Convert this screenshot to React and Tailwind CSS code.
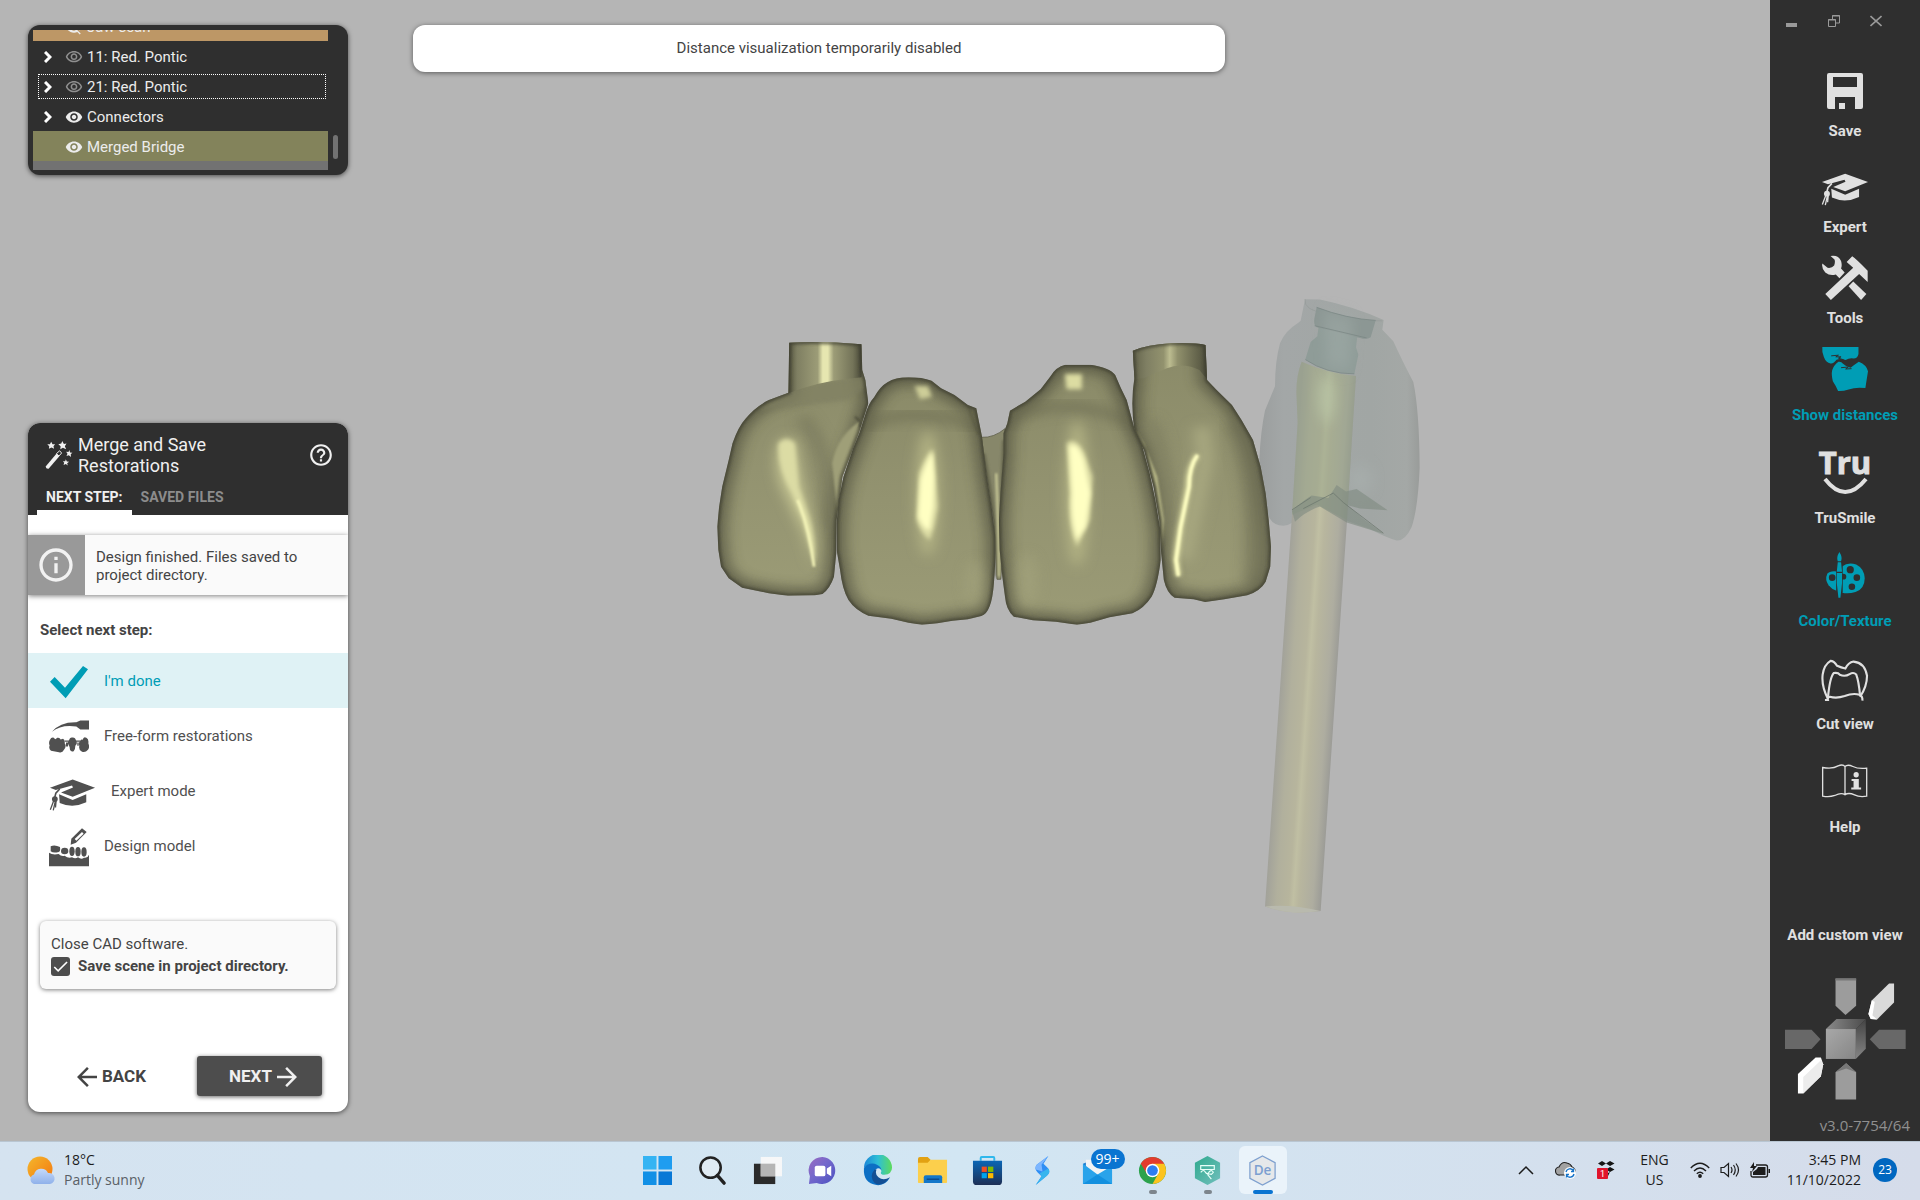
import React, { useState } from 'react';
import { MdVisibility, MdOutlineVisibility, MdVisibilityOff, MdHelpOutline, MdInfoOutline, MdCheck, MdArrowBack, MdArrowForward } from 'react-icons/md';

/* ---------- icons ---------- */

const CapIcon = ({ className }) => (
  <svg viewBox="155 515 145 105" className={className} fill="currentColor">
    <path d="M158 545L228 520L297 545L228 573L192 560L229 544L226 538L176 552Z" />
    <path d="M186 565L228 583L270 565V590Q228 610 188 592Z" />
    <circle cx="173" cy="580" r="9" />
    <path d="M188 549L176 562L172 578" fill="none" stroke="currentColor" strokeWidth="5" />
    <path d="M170 584L159 613M175 584L168 615M177 584L175 606" fill="none" stroke="currentColor" strokeWidth="4" />
  </svg>
);

const SaveIcon = () => (
  <svg viewBox="0 0 36 36" className="h-9 w-9" fill="currentColor" fillRule="evenodd">
    <path d="M2 0H34Q36 0 36 2V34Q36 36 34 36H28V24H8V36H2Q0 36 0 34V2Q0 0 2 0ZM6 4V14H30V4Z" />
    <path d="M12 30H18V36H12Z" />
  </svg>
);

const ToolsIcon = () => (
  <svg viewBox="153 767 144 140" className="h-[46px] w-12" fill="currentColor">
    <path d="M181 770Q205 766 213 785Q217 798 213 808L224 820L208 838L197 826Q180 832 165 820Q153 808 156 793L172 806Q185 808 192 799Q196 788 193 781Z" />
    <path d="M236 862L250 848L290 886L274 904Z" />
    <path d="M230 788L247 771Q258 778 294 815V849L268 825L182 904L165 886L250 806Z" />
  </svg>
);

const DistancesIcon = () => (
  <svg viewBox="153 1036 146 144" className="h-12 w-12" fill="currentColor">
    <path d="M157 1041H267V1062Q264 1076 252 1076Q238 1074 228 1081Q212 1074 200 1080Q192 1092 182 1091Q168 1088 162 1072Q155 1056 157 1041Z" />
    <path d="M187 1112Q192 1096 206 1086Q214 1084 220 1092Q230 1102 243 1104Q256 1094 268 1086Q292 1096 296 1115Q292 1140 288 1166Q260 1162 237 1170Q220 1176 205 1175Q198 1158 189 1145Q184 1125 187 1112Z" />
    <path d="M184 1068L206 1066L198 1071L214 1071L206 1075L222 1080M214 1104L236 1102L228 1108L246 1107" fill="none" stroke="#2f2f2f" strokeWidth="3" />
  </svg>
);

const TruIcon = () => (
  <svg viewBox="0 0 48 48" className="h-12 w-12 overflow-visible" fill="currentColor">
    <text x="24" y="26" textAnchor="middle" fontSize="31" stroke="currentColor" strokeWidth="1" fontFamily="'Open Sans', sans-serif">Tru</text>
    <path d="M4 31Q24 57 45 31" fill="none" stroke="currentColor" strokeWidth="4" />
  </svg>
);

const PaletteIcon = () => (
  <svg viewBox="153 394 146 144" className="h-12 w-12" fill="currentColor">
    <path d="M202 455Q180 452 172 462Q164 480 176 497Q186 510 202 515Z" />
    <path d="M217 440Q235 426 260 434Q284 446 286 475Q286 508 258 518Q236 524 217 520Z" />
    <g fill="#2f2f2f">
      <circle cx="187" cy="474" r="10" />
      <circle cx="242" cy="450" r="11" />
      <circle cx="262" cy="474" r="10" />
      <circle cx="247" cy="502" r="10" />
      <circle cx="221" cy="471" r="9" />
      <path d="M199 420H219V520H199Z" />
    </g>
    <path d="M209 396Q219 412 214 424H204Q199 412 209 396ZM204 427H214L217 456H201ZM201 460H217V490L212 535H206L201 490Z" />
  </svg>
);

const CutViewIcon = () => (
  <svg viewBox="153 703 146 144" className="h-12 w-12" fill="none" stroke="currentColor" strokeWidth="6.500">
    <path d="M174 838Q154 800 158 765Q162 735 182 723Q192 723 202 738Q215 744 227 746Q236 728 252 725Q286 728 293 768Q293 800 272 832" />
    <path d="M174 836Q180 772 192 760Q205 758 210 765Q226 772 240 763Q252 756 260 764Q268 785 272 830" />
    <path d="M165 842H174Q172 834 180 832Q200 838 225 830Q250 820 270 826Q280 830 279 844" />
  </svg>
);

const HelpBookIcon = () => (
  <svg viewBox="153 1012 146 144" className="h-12 w-12" fill="none" stroke="currentColor" strokeWidth="4">
    <path d="M158 1043Q190 1048 205 1038Q220 1032 226 1040Q234 1032 250 1040Q266 1048 292 1045V1130Q270 1134 255 1126Q236 1118 226 1126Q215 1118 195 1128Q178 1134 158 1130ZM226 1040V1126" />
    <g fill="currentColor" stroke="none">
      <circle cx="260" cy="1065" r="8" />
      <path d="M246 1078H268V1104H275V1110H245V1104H252V1084H246Z" />
    </g>
  </svg>
);

const WandIcon = () => (
  <svg viewBox="103 92 86 90" className="h-[30px] w-7 shrink-0" fill="currentColor">
    <path d="M105 172L138 133L147 141L114 179Q106 180 105 172Z" />
    <path d="M138 133L148 124L154 131L146 140Z" fill="none" stroke="currentColor" strokeWidth="3" />
    <path d="M122 96L126 104L134 104L129 110L131 118L123 114L115 118L116 110L110 104L118 104Z" />
    <path d="M156 94L161 103L169 102L164 110L168 119L158 115L150 119L151 110L144 104L153 102Z" />
    <path d="M178 122L180 129L187 130L182 135L183 143L176 138L169 140L172 133L168 127L175 128Z" />
    <path d="M167 150L170 157L177 158L171 162L173 169L167 165L160 168L162 161L158 156L165 156Z" />
  </svg>
);

const DoneIcon = () => (
  <svg viewBox="118 762 120 102" className="h-[34px] w-10 text-[#009db5]" fill="currentColor">
    <path d="M121 812L135 798L166 830L220 765L235 775L168 862Z" />
  </svg>
);

const FreeformIcon = () => (
  <svg viewBox="118 88 120 104" className="h-[35px] w-10" fill="currentColor">
    <path d="M127 126Q150 96 200 97L212 92H238V119H212L200 110Q155 103 127 126Z" />
    <path d="M121 150Q124 142 131 143L137 148L143 144Q150 142 153 149L160 147Q167 150 165 160Q172 168 163 180Q158 190 148 187L124 183Q116 176 120 167Q116 158 121 150Z" />
    <path d="M178 152Q180 142 188 143Q197 142 199 152Q205 160 197 168Q197 180 192 184Q184 187 181 180Q182 172 177 166Q172 158 178 152Z" />
    <path d="M211 154Q214 146 219 150Q222 138 230 144Q238 148 236 160Q241 172 235 180Q226 190 216 185Q206 180 209 168Q205 160 211 154Z" />
    <path d="M166 152H212V156H166ZM169 158H175V170H169ZM203 158H207V168H203Z" />
  </svg>
);

const DesignIcon = () => (
  <svg viewBox="117 408 120 118" className="h-10 w-10" fill="currentColor">
    <path d="M184 442L216 411L230 422L198 454L182 460Z" />
    <path d="M194 443L216 422L221 427L199 448Z" fill="#fff" />
    <path d="M117 484Q128 492 146 488Q154 496 164 493Q174 502 186 498Q196 504 204 498Q214 506 222 499Q232 502 237 490V525H117Z" />
    <path d="M122 465Q134 459 150 467Q152 480 146 482Q130 486 122 480Z" />
    <ellipse cx="164" cy="479" rx="11" ry="10" />
    <ellipse cx="186" cy="480" rx="8" ry="14" />
    <ellipse cx="204" cy="481" rx="8" ry="14" />
    <ellipse cx="222" cy="482" rx="8" ry="14" />
  </svg>
);

/* ---------- 3D scene ---------- */

const TEETH = [
  {
    id: 'lateral-left',
    d: 'M233 68Q320 63 422 73L424 150L432 180L440 250L415 340L372 470L357 600L356 700L350 770Q340 805 320 822L300 826L230 827L180 820L110 803L75 775L55 740L48 690L45 620L50 560L58 500L75 420L85 370Q100 320 120 295Q145 260 180 240L231 218Z',
  },
  {
    id: 'lateral-right',
    d: 'M1131 92Q1170 74 1230 70Q1290 67 1321 75L1325 180L1350 210L1390 255L1415 300L1445 360L1465 440L1478 520L1486 600L1492 680L1490 740L1478 785Q1465 812 1430 826L1370 838L1320 846L1290 838L1240 833Q1220 820 1212 780L1205 700L1200 600L1185 500L1160 390L1136 340Q1124 250 1135 175Z',
  },
  {
    id: 'central-left',
    d: 'M430 290Q440 250 455 232Q470 200 490 187Q510 172 545 172Q580 172 605 182L630 205L665 225L700 255L722 265L728 300L737 350L742 400L750 470L762 560L772 650L772 720L768 790Q762 880 735 888L700 898L660 902L620 910L580 914L545 908L500 896L440 887Q405 870 388 840Q372 810 366 750L357 690L357 610L362 540L375 470L400 385Q418 340 430 290Z',
  },
  {
    id: 'central-right',
    d: 'M810 272L850 245L890 208L915 170Q930 140 955 134L1020 134Q1070 142 1085 165L1100 205L1115 240L1135 325L1155 375L1175 460L1190 540L1203 630L1204 720Q1195 800 1180 830Q1160 865 1130 880L1070 892L1020 908L985 914L930 905L870 901L820 890Q800 870 797 830L790 770L783 690L781 600L785 520L793 400L793 340L803 310Z',
  },
];

const DETAILS = {
  'lateral-left': (
    <>
      <path d="M225 215Q300 186 375 177L435 168V200L390 240L250 260L150 270Z" fill="#7f7f62" opacity=".7" filter="url(#soft)" />
      <path d="M233 60H422V172L375 178Q300 188 231 220Z" fill="url(#post)" />
      <path d="M265 290Q350 400 335 620" fill="none" stroke="#77775b" strokeWidth="36" opacity=".7" filter="url(#wide)" />
      <path d="M345 430Q360 340 430 295V420L365 640Z" fill="#9f9f78" filter="url(#fine)" />
      <path d="M405 290L420 306L418 322" fill="none" stroke="#4b4b3a" strokeWidth="5" filter="url(#fine)" />
      <path d="M205 380Q225 330 250 370L268 500L290 610L300 745L272 640L230 540Q190 460 205 380Z" fill="#c6c693" filter="url(#wide)" />
      <path d="M205 370Q225 345 248 370L258 500L285 590Q305 660 300 735Q285 680 268 600L240 520Q200 440 205 370Z" fill="#dcdca4" filter="url(#soft)" />
      <path d="M255 540Q285 620 298 740" stroke="#f6f6ba" strokeWidth="7" fill="none" filter="url(#fine)" />
    </>
  ),
  'lateral-right': (
    <>
      <path d="M1125 60H1330L1327 180L1305 150Q1260 126 1220 145L1160 174L1135 178Z" fill="url(#postDim)" />
      <path d="M1400 300Q1470 480 1450 800" fill="none" stroke="#6c6c52" strokeWidth="60" opacity=".6" filter="url(#wide)" />
      <path d="M1175 300Q1230 420 1222 640" fill="none" stroke="#808062" strokeWidth="40" opacity=".8" filter="url(#wide)" />
      <path d="M1140 330L1165 390L1190 500L1204 600L1206 690L1212 600L1195 470L1160 370Z" fill="#b8b887" filter="url(#fine)" />
      <path d="M1310 320L1320 420L1285 600L1262 720" stroke="#a8a880" strokeWidth="44" fill="none" filter="url(#wide)" />
      <path d="M1300 405Q1276 440 1276 500L1256 620L1244 720L1250 768" stroke="#d8d8a0" strokeWidth="16" fill="none" filter="url(#soft)" />
      <path d="M1300 405Q1278 440 1278 500L1256 620L1244 720L1250 768" stroke="#ffffc2" strokeWidth="9" fill="none" filter="url(#fine)" />
    </>
  ),
  'central-left': (
    <>
      <path d="M430 320Q540 250 735 320" stroke="#66664d" strokeWidth="34" fill="none" opacity=".5" filter="url(#wide)" />
      <path d="M702 258Q708 290 728 345" stroke="#55553f" strokeWidth="5" fill="none" opacity=".6" filter="url(#fine)" />
      <path d="M560 198H596L606 230L575 238Z" fill="#cdcd98" filter="url(#soft)" />
      <ellipse cx="595" cy="520" rx="30" ry="190" fill="#b4b484" filter="url(#wide)" />
      <path d="M608 385Q588 410 572 460L566 600Q576 640 600 660L612 620L622 560L616 480Z" fill="#dcdca4" filter="url(#soft)" />
      <path d="M608 395Q588 430 576 480L570 590Q585 630 600 630L610 560L612 470Z" fill="#ffffc2" filter="url(#soft)" />
      <ellipse cx="720" cy="790" rx="26" ry="70" fill="#a4a47e" opacity=".6" filter="url(#wide)" />
    </>
  ),
  'central-right': (
    <>
      <path d="M805 300Q960 215 1130 310" stroke="#66664d" strokeWidth="34" fill="none" opacity=".5" filter="url(#wide)" />
      <path d="M953 162H998V208H958Z" fill="#dcdca2" filter="url(#soft)" />
      <ellipse cx="985" cy="520" rx="30" ry="220" fill="#b4b484" filter="url(#wide)" />
      <path d="M958 370Q980 345 1005 400L1026 470L1018 600L985 680Q960 620 966 520Z" fill="#dcdca4" filter="url(#soft)" />
      <path d="M965 380Q985 360 1003 420L1020 520L1008 620L985 660Q968 600 972 520Z" fill="#ffffc2" filter="url(#soft)" />
      <ellipse cx="855" cy="780" rx="26" ry="80" fill="#a4a47e" opacity=".6" filter="url(#wide)" />
    </>
  ),
};

const Tooth = ({ id, d }) => (
  <g>
    <clipPath id={`clip-${id}`}><path d={d} /></clipPath>
    <g clipPath={`url(#clip-${id})`}>
      <path d={d} fill="url(#enamel)" />
      <path d={d} fill="none" stroke="#4b4b3a" strokeWidth="50" opacity=".65" filter="url(#wide)" />
      {DETAILS[id]}
      <path d={d} fill="none" stroke="#3a3a2e" strokeWidth="12" opacity=".7" filter="url(#edge)" />
    </g>
  </g>
);

const Scene = () => (
  <svg viewBox="0 0 1770 1141" className="absolute inset-0 h-full w-full" role="img" aria-label="Merged bridge">
    <defs>
      <filter id="wide" x="-80%" y="-40%" width="260%" height="180%"><feGaussianBlur stdDeviation="18" /></filter>
      <filter id="soft" x="-60%" y="-60%" width="220%" height="220%"><feGaussianBlur stdDeviation="6" /></filter>
      <filter id="edge" x="-20%" y="-20%" width="140%" height="140%"><feGaussianBlur stdDeviation="4" /></filter>
      <filter id="fine" x="-60%" y="-60%" width="220%" height="220%"><feGaussianBlur stdDeviation="2.5" /></filter>
      <linearGradient id="enamel" x2="0" y2="1">
        <stop offset="0" stopColor="#8a8a68" />
        <stop offset=".5" stopColor="#939370" />
        <stop offset="1" stopColor="#9b9b76" />
      </linearGradient>
      <linearGradient id="post">
        <stop offset="0" stopColor="#55553f" />
        <stop offset=".12" stopColor="#7f7f62" />
        <stop offset=".4" stopColor="#9c9c77" />
        <stop offset=".47" stopColor="#e6e6b0" />
        <stop offset=".54" stopColor="#e6e6b0" />
        <stop offset=".62" stopColor="#9c9c77" />
        <stop offset=".88" stopColor="#747459" />
        <stop offset="1" stopColor="#4a4a39" />
      </linearGradient>
      <linearGradient id="postDim">
        <stop offset="0" stopColor="#5e5e47" />
        <stop offset=".2" stopColor="#7f7f63" />
        <stop offset=".42" stopColor="#92926e" />
        <stop offset=".5" stopColor="#bcbc90" />
        <stop offset=".6" stopColor="#90906c" />
        <stop offset="1" stopColor="#4a4a39" />
      </linearGradient>
      <linearGradient id="rod" gradientUnits="userSpaceOnUse" x1="135" y1="1535" x2="301" y2="1549">
        <stop offset="0" stopColor="#a2a29a" />
        <stop offset=".2" stopColor="#b1b09d" />
        <stop offset=".42" stopColor="#b7b59d" />
        <stop offset=".5" stopColor="#c0bfa3" />
        <stop offset=".6" stopColor="#b8b69e" />
        <stop offset=".85" stopColor="#aeada0" />
        <stop offset="1" stopColor="#9c9c97" />
      </linearGradient>
      <linearGradient id="shell">
        <stop offset="0" stopColor="#9b9e9e" />
        <stop offset=".15" stopColor="#a3a7a7" />
        <stop offset=".7" stopColor="#a1a6a4" />
        <stop offset=".92" stopColor="#a4a8a6" />
        <stop offset="1" stopColor="#999c9a" />
      </linearGradient>
    </defs>

    {/* implant with translucent crown */}
    <g transform="translate(1220 280) scale(0.3333 0.4082)">
      <path d="M255 47L300 48Q400 65 491 98L487 122L520 150Q545 195 580 250Q598 320 599 460Q594 560 575 605Q555 640 530 638Q500 632 450 610L380 590L300 552L260 565Q220 600 190 602Q150 600 143 570Q120 510 118 440Q122 370 135 320L165 260Q165 200 180 155Q195 125 235 105L242 100Z" fill="url(#shell)" />
      <path d="M255 47Q250 75 320 82Q420 102 487 100" fill="none" stroke="#959b99" strokeWidth="2" />
      <ellipse cx="420" cy="490" rx="40" ry="35" fill="#abb3b1" opacity=".5" filter="url(#wide)" />
      <path d="M245 200Q226 240 230 290L233 350L216 575L135 1535Q210 1556 302 1546L381 590L395 400L408 235Q320 228 245 200Z" fill="url(#rod)" />
      <path d="M245 200Q226 240 230 290L233 350L216 575L290 550L381 588L395 400L408 235Q320 228 245 200Z" fill="#8fa083" opacity=".42" />
      <ellipse cx="320" cy="290" rx="26" ry="60" fill="#bcc8a8" opacity=".7" filter="url(#wide)" />
      <path d="M135 1535Q210 1528 302 1546Q210 1556 135 1535Z" fill="#b9baae" />
      <path d="M296 113L412 138L408 165L415 183L403 230Q320 230 256 195L272 152L292 138Z" fill="#8f9c98" />
      <path d="M290 67Q380 95 467 99L452 140Q440 147 420 142L290 116Q280 108 283 95Z" fill="#8c9794" />
      <path d="M310 75L400 92L390 220L320 215Z" fill="#a0aca8" opacity=".5" filter="url(#wide)" />
      <path d="M290 67Q380 95 467 99M284 112L440 142M256 195Q320 230 403 230" fill="none" stroke="#7a8684" strokeWidth="2" />
      <path d="M216 565Q250 540 275 528L325 534L350 502L378 518L410 512L503 564L420 560L383 552L430 585L492 622L380 594L300 555Q260 565 225 592Z" fill="#7f8b80" opacity=".6" />
      <path d="M216 563L272 533M250 560L340 522L370 545L490 620" fill="none" stroke="#6b766c" strokeWidth="2" />
    </g>

    {/* merged bridge */}
    <g transform="translate(700 320) scale(0.3827 0.3333)">
      <path d="M735 352Q768 354 797 326V600L786 778H776L768 600Z" fill="#87876a" stroke="#55553f" strokeWidth="2" />
      <path d="M740 400Q775 600 776 770M795 360L788 600" stroke="#55553f" strokeWidth="10" fill="none" opacity=".7" filter="url(#edge)" />
      <path d="M774 460Q780 600 781 770" stroke="#c9c997" strokeWidth="6" fill="none" filter="url(#fine)" />
      {TEETH.map((tooth) => <Tooth key={tooth.id} {...tooth} />)}
    </g>
  </svg>
);

/* ---------- left panels ---------- */

const treeItems = [
  { name: 'Jaw scan', eye: 'off', row: 'bg-[#bd9766]' },
  { name: '11: Red. Pontic', eye: 'outline', expandable: true },
  { name: '21: Red. Pontic', eye: 'outline', expandable: true, focused: true },
  { name: 'Connectors', eye: 'on', expandable: true },
  { name: 'Merged Bridge', eye: 'on', row: 'bg-[#83835b]' },
];

const getEye = (eye) => {
  switch (eye) {
    case 'off': return <MdVisibilityOff className="h-[18px] w-[18px]" />;
    case 'outline': return <MdOutlineVisibility className="h-[18px] w-[18px] text-[#8f8f8f]" />;
    default: return <MdVisibility className="h-[18px] w-[18px]" />;
  }
};

const ObjectTree = () => (
  <section className="flex h-[150px] rounded-xl bg-[#2f2f2f] p-[5px] shadow-[0_1px_5px_rgba(0,0,0,0.6)]">
    <ul className="flex flex-1 flex-col justify-end overflow-hidden text-[15px] text-[#ececec]">
      {treeItems.map((item) => (
        <li key={item.name} className={`h-[30px] shrink-0 pt-[3px] pr-0.5 pl-[5px] ${item.row || ''}`}>
          <button className={`flex h-[25px] w-full items-center border pt-px pl-[5px] ${item.focused ? 'border-dotted border-white' : 'border-transparent'}`}>
            <span className="w-[21px]">
              {item.expandable && (
                <svg viewBox="0 0 8 12" className="h-3 w-2" fill="none" stroke="#fff" strokeWidth="3"><path d="M1 1L6 6L1 11" /></svg>
              )}
            </span>
            {getEye(item.eye)}
            <span className="ml-1">{item.name}</span>
          </button>
        </li>
      ))}
      <li className="h-[9px] shrink-0 bg-[#727272]" />
    </ul>
    <div className="flex w-[15px] flex-col justify-end pb-[11px] pl-[5px]">
      <div className="h-6 w-[5px] rounded-full bg-[#727272]" />
    </div>
  </section>
);

const steps = [
  { name: "I'm done", icon: <DoneIcon /> },
  { name: 'Free-form restorations', icon: <FreeformIcon /> },
  { name: 'Expert mode', icon: <CapIcon className="mt-1.5 h-[34px] w-[47px]" /> },
  { name: 'Design model', icon: <DesignIcon /> },
];

const Wizard = () => {
  const [activeTab, setActiveTab] = useState('next');
  const [activeStep, setActiveStep] = useState("I'm done");
  const [saveScene, setSaveScene] = useState(true);

  const tabClass = (tab) =>
    `h-[38px] border-b-[5px] px-[9px] pt-[7px] text-sm font-bold ${activeTab === tab ? 'border-white text-[#f0f0f0]' : 'border-transparent text-[#8c8c8c]'}`;

  return (
    <section className="flex flex-1 flex-col overflow-hidden rounded-xl bg-white text-[#444] shadow-[0_1px_5px_rgba(0,0,0,0.6)]">
      <header className="bg-[#2f2f2f] px-[9px] pt-[9px] text-[#f0f0f0]">
        <div className="flex h-[45px] items-center pr-[5px] pl-2">
          <WandIcon />
          <h1 className="ml-[5px] flex-1 text-lg leading-[21px]">Merge and Save<br />Restorations</h1>
          <button aria-label="Help"><MdHelpOutline className="h-[26px] w-[26px]" /></button>
        </div>
        <div className="flex">
          <button className={tabClass('next')} onClick={() => setActiveTab('next')}>NEXT STEP:</button>
          <button className={tabClass('files')} onClick={() => setActiveTab('files')}>SAVED FILES</button>
        </div>
      </header>

      <div className="mt-5 flex h-[60px] bg-[#fafafa] shadow-[0_1px_5px_rgba(0,0,0,0.5)]">
        <div className="flex w-[57px] items-center justify-center bg-[#999] pr-0.5">
          <MdInfoOutline className="h-10 w-10 text-[#f2f2f2]" />
        </div>
        <p className="flex-1 pt-[13px] pl-[11px] text-[15px] leading-[18px]">Design finished. Files saved to<br />project directory.</p>
      </div>

      <h2 className="mt-[25px] px-3 text-[15px] leading-5 font-bold">Select next step:</h2>
      <div className="mt-[13px] flex flex-col">
        {steps.map((step) => (
          <button
            key={step.name}
            onClick={() => setActiveStep(step.name)}
            className={`flex h-[55px] items-center gap-[15px] pt-0.5 pl-[21px] text-[15px] ${activeStep === step.name ? 'bg-[#dff2f5] text-[#009db5]' : 'text-[#505050]'}`}
          >
            {step.icon}
            {step.name}
          </button>
        ))}
      </div>

      <div className="mx-3 mt-12 rounded-md bg-[#fafafa] px-[11px] pt-3 pb-[11px] text-[15px] shadow-[0_1px_4px_rgba(0,0,0,0.5)]">
        <p className="leading-[22px]">Close CAD software.</p>
        <label className="flex items-center gap-2 leading-[23px] font-bold">
          <span className="relative h-[19px] w-[19px]">
            <input
              type="checkbox"
              checked={saveScene}
              onChange={(e) => setSaveScene(e.target.checked)}
              className="block h-[19px] w-[19px] appearance-none rounded-[3px] bg-[#4d4d4d]"
            />
            {saveScene && <MdCheck className="pointer-events-none absolute inset-0 h-[19px] w-[19px] text-white" />}
          </span>
          Save scene in project directory.
        </label>
      </div>

      <footer className="mt-auto flex items-center justify-between pr-[26px] pb-4 pl-11 text-[17px] font-bold">
        <button className="flex items-center pt-px"><MdArrowBack className="h-[30px] w-[30px]" />BACK</button>
        <button className="flex h-10 w-[125px] items-center justify-center rounded-[3px] bg-[#4d4d4d] pt-px pl-3 text-[#f0f0f0] shadow-[0_1px_4px_rgba(0,0,0,0.6)]">
          NEXT<MdArrowForward className="h-[30px] w-[30px]" />
        </button>
      </footer>
    </section>
  );
};

/* ---------- right toolbar ---------- */

const tools = [
  { name: 'Save', icon: <SaveIcon />, space: 'gap-1.5' },
  { name: 'Expert', icon: <CapIcon className="h-[35px] w-12" />, space: 'mt-6 gap-1' },
  { name: 'Tools', icon: <ToolsIcon />, space: 'mt-[17px] gap-1.5' },
  { name: 'Show distances', icon: <DistancesIcon />, space: 'mt-[17px] gap-3', active: true },
  { name: 'TruSmile', icon: <TruIcon />, space: 'mt-[23px] gap-3' },
  { name: 'Color/Texture', icon: <PaletteIcon />, space: 'mt-[23px] gap-3', active: true },
  { name: 'Cut view', icon: <CutViewIcon />, space: 'mt-[23px] gap-3' },
  { name: 'Help', icon: <HelpBookIcon />, space: 'mt-[23px] gap-3' },
];

const ViewCube = () => (
  <svg viewBox="45 230 370 375" className="h-[125px] w-[123px]">
    <defs>
      <linearGradient id="cubeFront" x2="1" y2="1"><stop stopColor="#a8a8a8" /><stop offset="1" stopColor="#868686" /></linearGradient>
      <linearGradient id="cubeTop" x2="1"><stop stopColor="#8a8a8a" /><stop offset="1" stopColor="#4c4c4c" /></linearGradient>
      <linearGradient id="cubeSide" x2="0" y2="1"><stop stopColor="#444" /><stop offset="1" stopColor="#858585" /></linearGradient>
    </defs>
    <path d="M200 234H262V316L230 344L200 316Z" fill="#9c9c9c" />
    <path d="M200 234H262V240H200Z" fill="#777" />
    <path d="M200 598V516L232 489L262 516V598Z" fill="#9c9c9c" />
    <path d="M200 516L232 489L262 516L232 505Z" fill="#777" />
    <path d="M48 388H128L155 417L128 446H48Z" fill="#686868" />
    <path d="M411 388H331L303 417L331 446H411Z" fill="#686868" />
    <path d="M376 249V306L325 357L306 356L299 341L309 300L361 249Z" fill="#dadada" />
    <path d="M309 300L318 304L311 345L325 357L306 356L299 341Z" fill="#fff" />
    <path d="M87 580V521L140 472H156L163 492L156 528L103 580Z" fill="#fff" />
    <path d="M103 580V530L156 480L163 492L156 528Z" fill="#ececec" />
    <path d="M171 386L203 356H291L261 386Z" fill="url(#cubeTop)" />
    <path d="M261 386L291 356V445L261 476Z" fill="url(#cubeSide)" />
    <path d="M171 386H261V476H171Z" fill="url(#cubeFront)" />
  </svg>
);

const Toolbar = () => (
  <aside className="flex w-[150px] shrink-0 flex-col items-center bg-[#2f2f2f] text-[15px] leading-5 font-bold text-[#e0e0e0]">
    <div className="flex h-[67px] w-full gap-[30px] pt-[15px] pl-4 text-[#9a9a9a]">
      <button aria-label="Minimize" className="h-3"><svg viewBox="0 0 12 12" className="h-3 w-3"><path d="M0 8H11V12H0Z" fill="currentColor" /></svg></button>
      <button aria-label="Restore" className="h-3"><svg viewBox="0 0 12 12" className="h-3 w-3" fill="none" stroke="currentColor"><path d="M4.500 4V.5H11.500V8H8M4 1H12" /><path d="M.5 4.500H7.500V11.500H.5ZM0 5H8" /></svg></button>
      <button aria-label="Close" className="h-3"><svg viewBox="0 0 12 12" className="h-3 w-3" fill="none" stroke="currentColor" strokeWidth="1.600"><path d="M.5 1L11.500 11M11.500 1L.5 11" /></svg></button>
    </div>
    {tools.map((tool) => (
      <button key={tool.name} className={`flex flex-col items-center ${tool.space} ${tool.active ? 'text-[#009db5]' : ''}`}>
        <span className="flex h-12 items-center">{tool.icon}</span>
        {tool.name}
      </button>
    ))}
    <button className="mt-[88px]">Add custom view</button>
    <div className="mt-8 pl-px"><ViewCube /></div>
    <p className="mt-[13px] self-end pr-[10px] font-['Open_Sans',sans-serif] text-[15px] font-normal text-[#8f8f8f]">v3.0-7754/64</p>
  </aside>
);

/* ---------- taskbar ---------- */

const apps = [
  {
    name: 'Start',
    icon: <><path d="M1 1H15V15H1Z" fill="#35b4f3" /><path d="M17 1H31V15H17Z" fill="#1f9df0" /><path d="M1 17H15V31H1Z" fill="#1290e6" /><path d="M17 17H31V31H17Z" fill="#0878d6" /></>,
  },
  {
    name: 'Search',
    icon: <><circle cx="14" cy="13" r="10.500" fill="#e9eef3" fillOpacity=".6" stroke="#222" strokeWidth="2.600" /><path d="M21 21L28 29" stroke="#222" strokeWidth="3.500" strokeLinecap="round" /></>,
  },
  {
    name: 'Task view',
    icon: <><path d="M2 9H24V30H2Z" fill="#2b2b2b" /><path d="M9 2H31V22H9Z" fill="#f8f8f8" fillOpacity=".92" /><path d="M9 9H24V22H9Z" fill="#b5b5b5" /></>,
  },
  {
    name: 'Chat',
    icon: <><path d="M16 2A14 14 0 1 1 10 29L2 30L3 22A14 14 0 0 1 16 2Z" fill="url(#chatFill)" /><rect x="8" y="11" width="11" height="11" rx="2" fill="#fff" /><path d="M20.500 14L25 11V22L20.500 19Z" fill="#fff" /></>,
  },
  {
    name: 'Edge',
    icon: <><path d="M2 14A14.500 14.500 0 0 1 31 13Q31 20 23 20.500Q18 20 20 17Q20 11 13 10Q5 9 2 14Z" fill="url(#edgeTop)" /><path d="M2 14Q5 8 13 9Q20 11 20 16Q18 12 14 15Q9 22 17 27Q24 30 29 23Q24 32 15 31Q1 29 2 14Z" fill="#0c6fc4" /><path d="M13 15Q7 22 13 29Q21 34 29 23Q22 27 17 23Q13 20 15 15Z" fill="#134f94" /></>,
  },
  {
    name: 'File Explorer',
    icon: <><path d="M1 4Q1 2 3 2H11L14 5V10H1Z" fill="#e2a112" /><path d="M1 8H11L14 5H31V28Q31 29 29 29H3Q1 29 1 28Z" fill="#fccf4c" /><path d="M7 29V23Q7 21 9 21H24Q26 21 26 23V29Z" fill="#1377c9" /><path d="M10 25H23" stroke="#0a4a8c" strokeWidth="1.500" /></>,
  },
  {
    name: 'Microsoft Store',
    icon: <><path d="M9 6V3Q9 2 10 2H22Q23 2 23 3V6" fill="none" stroke="#2fb8ec" strokeWidth="2" /><path d="M1 6H31V27Q31 31 27 31H5Q1 31 1 27Z" fill="url(#storeFill)" /><path d="M10 12H15.300V17.500H10Z" fill="#f25022" /><path d="M16.500 12H22V17.500H16.500Z" fill="#7fba00" /><path d="M10 18.700H15.300V24H10Z" fill="#00a4ef" /><path d="M16.500 18.700H22V24H16.500Z" fill="#ffb900" /></>,
  },
  {
    name: 'S',
    icon: <><path d="M22 1L10 10Q7 14 11 18L15 22L9 31L21 21Q25 17 21 13L17 9Z" fill="#2f8ef4" /><path d="M22 1L10 10Q8 12 9 15L16 17L15 10Z" fill="#7db6ff" /><path d="M22 14Q25 18 20 22L9 31L15 22L13 19Z" fill="#37b5ee" /></>,
  },
  {
    name: 'Mail',
    icon: <><path d="M1 9L16 3L31 9V30H1Z" fill="#1b7bd0" /><path d="M4 5H28V17L16 22L4 14Z" fill="#f4f4f4" /><path d="M1 9L16 20L31 11V30H1Z" fill="#2aa3ea" /><path d="M1 30L16 20L31 30Z" fill="#1390df" /></>,
    badge: '99+',
  },
  {
    name: 'Chrome',
    icon: <><circle cx="16" cy="16" r="14" fill="#2ba24c" /><path d="M16 16L3.900 9A14 14 0 0 1 28.100 9Z" fill="#e33b2e" /><path d="M16 9H28.100A14 14 0 0 1 16 30L22 19Z" fill="#fcc31e" /><path d="M4 9L10 19L16 9Z" fill="#e33b2e" /><circle cx="16" cy="16" r="7" fill="#fff" /><circle cx="16" cy="16" r="5.500" fill="#2d7df0" /></>,
    running: true,
  },
  {
    name: 'Dental DB',
    icon: <><path d="M16 1L29 8V24L16 31L3 24V8Z" fill="url(#dbFill)" /><path d="M9 11H23V15H9ZM9 18Q12 14 14 18Q16 21 18 17Q21 15 22 18L20 20L15 19M16 20L20 25" fill="none" stroke="#e8fff8" strokeWidth="1.200" /></>,
    running: true,
  },
  {
    name: 'Designer',
    icon: <><path d="M16 1L29 8V24L16 31L3 24V8Z" fill="#e6e8ea" stroke="#7ea0cf" strokeWidth="1.300" /><text x="16" y="21" textAnchor="middle" fontSize="14" fontWeight="600" fill="#7d9fd0" fontFamily="'Open Sans', sans-serif">De</text></>,
    current: true,
  },
];

const Taskbar = () => (
  <footer className="grid h-[59px] shrink-0 grid-cols-[1fr_auto_1fr] items-center border-t border-[#b9c6d2] bg-linear-to-r from-[#d5e3f0] via-[#d2e6f3] to-[#d5dcea] pb-0.5 font-['Open_Sans','Noto_Sans',sans-serif] text-sm leading-5 text-[#1c1c1c]">
    <svg className="absolute h-0 w-0">
      <defs>
        <linearGradient id="chatFill" x2="1" y2="1"><stop stopColor="#9b6bc0" /><stop offset=".45" stopColor="#7468cc" /><stop offset="1" stopColor="#4a50c0" /></linearGradient>
        <linearGradient id="edgeTop" x2="1"><stop stopColor="#1a86d8" /><stop offset=".5" stopColor="#2fbfd5" /><stop offset="1" stopColor="#5ddb5c" /></linearGradient>
        <linearGradient id="storeFill" x2="0" y2="1"><stop stopColor="#0b66b5" /><stop offset="1" stopColor="#1d2f55" /></linearGradient>
        <linearGradient id="dbFill" x2="1" y2="1"><stop stopColor="#2ea98d" /><stop offset="1" stopColor="#72bfbd" /></linearGradient>
        <linearGradient id="sunFill" x2="1" y2="1"><stop stopColor="#f4b72c" /><stop offset="1" stopColor="#f4770f" /></linearGradient>
        <linearGradient id="cloudFill" x2="0" y2="1"><stop stopColor="#c4d9fa" /><stop offset="1" stopColor="#8fb1ea" /></linearGradient>
      </defs>
    </svg>

    <button className="flex items-center gap-2 pl-[26px] text-left">
      <svg viewBox="0 0 30 30" className="h-[30px] w-[30px]">
        <circle cx="14" cy="14" r="12.500" fill="url(#sunFill)" />
        <path d="M8 29A5 5 0 0 1 8 19.500A7.500 7.500 0 0 1 22 18A5.500 5.500 0 0 1 24 29Z" fill="url(#cloudFill)" />
      </svg>
      <span>18°C<br /><span className="text-[#5a6066]">Partly sunny</span></span>
    </button>

    <nav className="flex gap-[7px]">
      {apps.map((app) => (
        <button key={app.name} aria-label={app.name} className={`relative flex h-12 w-12 items-center justify-center rounded-md ${app.current ? 'bg-[#eaf3fa]' : ''}`}>
          <svg viewBox="0 0 32 32" className="h-[31px] w-[31px]">{app.icon}</svg>
          {app.badge && <span className="absolute top-[3px] left-[17px] rounded-full bg-[#0a74d1] px-[5px] text-sm leading-5 text-white">{app.badge}</span>}
          {app.running && <span className="absolute bottom-0 h-1 w-2 rounded-full bg-[#7d858c]" />}
          {app.current && <span className="absolute bottom-0 h-1 w-5 rounded-full bg-[#0a74d1]" />}
        </button>
      ))}
    </nav>

    <div className="flex items-center justify-end pr-[23px]">
      <button aria-label="Show hidden icons">
        <svg viewBox="0 0 16 10" className="h-[10px] w-4" fill="none" stroke="#1c1c1c" strokeWidth="1.500"><path d="M1 9L8 2L15 9" /></svg>
      </button>
      <svg viewBox="0 0 22 18" className="ml-[21px] h-[18px] w-[22px]">
        <path d="M5 14A4 4 0 0 1 4 6Q7 0 12 2Q16 3 17 6Q21 8 20 12Q19 14 17 14Z" fill="#a2a2a2" stroke="#222" strokeWidth="1.200" />
        <circle cx="15" cy="12" r="6" fill="#fff" />
        <path d="M11 11A4 4 0 0 1 18.500 10M19 13A4 4 0 0 1 11.500 14M18.500 7.500V10.500H16M11.500 16.500V13.500H14" fill="none" stroke="#1673c8" strokeWidth="1.300" />
      </svg>
      <svg viewBox="0 0 20 20" className="ml-[19px] h-5 w-5">
        <path d="M6 1L10 3.500L6 6L2 3.500ZM14 1L18.500 3.500L14 6L10 3.500ZM14 7L18.500 9.500L14 12L10 9.500ZM12 13L14 12L12 16Z" fill="#151515" />
        <rect x="1" y="8" width="11" height="11" rx="1" fill="#e0142c" />
        <text x="6.500" y="17" textAnchor="middle" fontSize="9" fill="#fff" fontFamily="Roboto, sans-serif">1</text>
      </svg>
      <span className="ml-[24px] text-center">ENG<br />US</span>
      <svg viewBox="0 0 20 16" className="ml-[21px] h-4 w-5" fill="none" stroke="#1c1c1c" strokeWidth="1.400">
        <path d="M.8 6Q10 -3.500 19.200 6M4 9Q10 3 16 9M6.800 11.800Q10 8.600 13.200 11.800" />
        <circle cx="10" cy="14" r="1.200" fill="#1c1c1c" />
      </svg>
      <svg viewBox="0 0 20 16" className="ml-[10px] h-4 w-5" fill="none" stroke="#1c1c1c" strokeWidth="1.200">
        <path d="M1 5.500H4L8.500 1.500V14.500L4 10.500H1ZM11 5Q13 8 11 11M13.500 3Q17 8 13.500 13M16 1.500Q21 8 16 14.500" />
      </svg>
      <svg viewBox="0 0 20 16" className="ml-[10px] h-4 w-5">
        <path d="M6 3H15.500Q17.500 3 17.500 5V13Q17.500 15 15.500 15H3Q1 15 1 13V9" fill="none" stroke="#1c1c1c" strokeWidth="1.300" />
        <path d="M8 5H15.500V13H3V10L7 7ZM18.500 7H20V11H18.500ZM4 0L0 6H3L2 10L7 4H4Z" fill="#1c1c1c" />
      </svg>
      <span className="ml-[17px] text-right">3:45 PM<br />11/10/2022</span>
      <span className="ml-3 flex h-6 w-6 items-center justify-center rounded-full bg-[#0067c0] text-xs text-white">23</span>
    </div>
  </footer>
);

export default function App() {
  return (
    <div className="flex min-h-screen flex-col bg-[#b5b5b5] font-[Roboto,sans-serif]">
      <div className="flex flex-1">
        <main className="relative flex flex-1">
          <Scene />
          <div className="relative flex w-full items-stretch gap-[65px] pt-[25px] pb-[29px] pl-7">
            <div className="flex w-80 shrink-0 flex-col gap-[248px]">
              <ObjectTree />
              <Wizard />
            </div>
            <p role="status" className="flex h-[47px] w-[812px] items-center justify-center self-start rounded-xl bg-white text-[15px] text-[#444] shadow-[0_1px_5px_rgba(0,0,0,0.5)]">
              Distance visualization temporarily disabled
            </p>
          </div>
        </main>
        <Toolbar />
      </div>
      <Taskbar />
    </div>
  );
}
